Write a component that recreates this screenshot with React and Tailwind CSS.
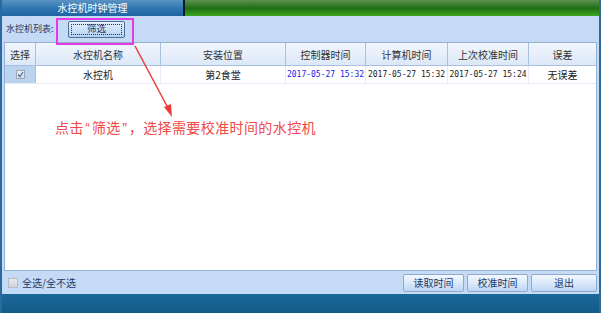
import React from "react";

const cols = [
  { w: "w-[31px]", label: "选择" },
  { w: "w-[125px]", label: "水控机名称" },
  { w: "w-[125px]", label: "安装位置" },
  { w: "w-[80px]", label: "控制器时间" },
  { w: "w-[82px]", label: "计算机时间" },
  { w: "w-[81px]", label: "上次校准时间" },
  { w: "flex-1", label: "误差" },
];

function Btn({ children, className = "" }) {
  return (
    <div
      className={
        "h-[18px] flex items-center justify-center rounded-[2px] border border-[#8ea9c9] bg-gradient-to-b from-[#f3f8ff] via-[#dbe9fa] to-[#bcd6f4] text-[10px] text-[#1d3a66] " +
        className
      }
    >
      {children}
    </div>
  );
}

export default function App() {
  return (
    <div
      className="relative w-[601px] h-[315px] bg-white overflow-hidden"
      style={{ fontFamily: '"Noto Sans CJK SC", "Liberation Sans", sans-serif' }}
    >
      <div className="h-[313px] flex flex-col border-x-[2px] border-[#2a6a9e]">
        {/* top bar */}
        <div className="h-[16px] flex shrink-0">
          <div className="w-[181px] bg-gradient-to-b from-[#5a93c2] via-[#2f77b3] to-[#1f64a2] flex items-center justify-center text-[10px] leading-none text-white">
            水控机时钟管理
          </div>
          <div className="w-[2px] bg-[#0b1a24]" />
          <div className="flex-1 bg-gradient-to-b from-[#5c9150] via-[#1f6e12] to-[#3da51f]" />
        </div>

        {/* body */}
        <div className="flex-1 bg-[#c5dbf5] flex flex-col px-[2px]">
          <div className="h-[26px] flex items-center shrink-0">
            <span className="ml-[2px] w-[58px] text-[9px] text-[#1d3a66] whitespace-nowrap">水控机列表:</span>
            <div className="ml-[4px] w-[57px] h-[17px] rounded-[2px] border border-[#4d6f98] bg-gradient-to-b from-[#e6f0fd] to-[#b6d2f3] p-[2px]">
              <div className="h-full border border-dotted border-[#333] flex items-center justify-center text-[9.5px] leading-none text-[#1d3a66]">
                筛选
              </div>
            </div>
          </div>

          {/* table */}
          <div className="h-[229px] border border-[#93b0d2] bg-white flex flex-col shrink-0">
            <div className="h-[23px] flex border-b border-[#a9c1de] bg-gradient-to-b from-[#f1f6fd] to-[#dce8f8]">
              {cols.map((c, i) => (
                <div
                  key={i}
                  className={
                    c.w +
                    " flex items-center justify-center text-[10px] text-[#333] " +
                    (i < cols.length - 1 ? "border-r border-[#a9c1de]" : "")
                  }
                >
                  {c.label}
                </div>
              ))}
            </div>
            <div className="h-[18px] flex border-b border-[#e3ebf6] text-[10px] text-[#222]">
              <div className="w-[31px] bg-[#bad4f0] border-r border-[#a9c1de] flex items-center justify-center">
                <div className="w-[9px] h-[9px] border border-[#9aa8b8] bg-gradient-to-b from-[#f0f0f0] to-[#d6dbe2] flex items-center justify-center">
                  <svg width="7" height="7" viewBox="0 0 7 7">
                    <path d="M1 3.5 L3 5.5 L6 1" stroke="#4a6a9a" strokeWidth="1.2" fill="none" />
                  </svg>
                </div>
              </div>
              <div className="w-[125px] border-r border-[#e3ebf6] flex items-center justify-center">水控机</div>
              <div className="w-[125px] border-r border-[#e3ebf6] flex items-center justify-center">第2食堂</div>
              <div
                className="w-[80px] border-r border-[#e3ebf6] flex items-center justify-center text-[8px] text-[#1a1ae6]"
                style={{ fontFamily: '"DejaVu Sans Mono", monospace' }}
              >
                2017-05-27 15:32
              </div>
              <div
                className="w-[82px] border-r border-[#e3ebf6] flex items-center justify-center text-[8px]"
                style={{ fontFamily: '"DejaVu Sans Mono", monospace' }}
              >
                2017-05-27 15:32
              </div>
              <div
                className="w-[81px] border-r border-[#e3ebf6] flex items-center justify-center text-[8px]"
                style={{ fontFamily: '"DejaVu Sans Mono", monospace' }}
              >
                2017-05-27 15:24
              </div>
              <div className="flex-1 flex items-center justify-center">无误差</div>
            </div>
          </div>

          {/* footer */}
          <div className="flex-1 flex items-center">
            <div className="ml-[4px] w-[10px] h-[10px] border border-[#b4bcc6] bg-gradient-to-b from-[#e8eaee] to-[#cfd4db]" />
            <span className="ml-[4px] text-[10px] text-[#1d3a66]">全选/全不选</span>
            <div className="flex-1" />
            <div className="flex gap-[3px]">
              <Btn className="w-[61px]">读取时间</Btn>
              <Btn className="w-[61px]">校准时间</Btn>
              <Btn className="w-[66px]">退出</Btn>
            </div>
          </div>
        </div>

        {/* bottom bar */}
        <div className="h-[19px] shrink-0 bg-gradient-to-b from-[#1c6898] to-[#125a88]" />
      </div>

      {/* annotation overlay */}
      <div className="absolute left-[56px] top-[18px] w-[78px] h-[27px] border-[2px] border-[#e63ae6]" />
      <svg className="absolute left-0 top-0" width="601" height="315">
        <line x1="135" y1="46" x2="168" y2="108" stroke="#ee3a3a" strokeWidth="1.5" />
        <polygon points="172,117 164,107 171,104" fill="#ee3a3a" />
      </svg>
      <div
        className="absolute left-[55px] top-[118px] text-[14px] leading-[20px] tracking-[0.4px] text-[#f04848] whitespace-nowrap"
        style={{ fontFamily: '"Liberation Sans", "Noto Sans CJK SC", sans-serif' }}
      >
        点击<span className="px-[1.5px]">“</span>筛选<span className="px-[1.5px]">”</span>，选择需要校准时间的水控机
      </div>
    </div>
  );
}
